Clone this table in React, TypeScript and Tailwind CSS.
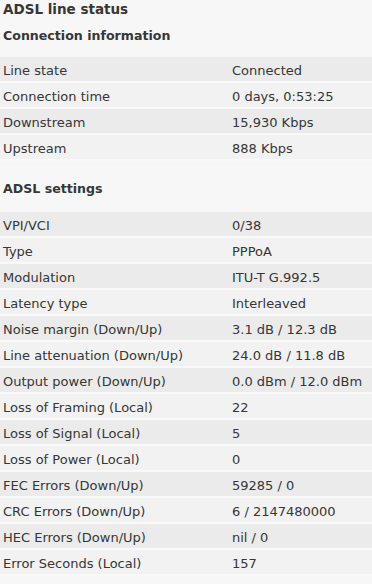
const connection: [string, string][] = [
  ["Line state", "Connected"],
  ["Connection time", "0 days, 0:53:25"],
  ["Downstream", "15,930 Kbps"],
  ["Upstream", "888 Kbps"],
];

const settings: [string, string][] = [
  ["VPI/VCI", "0/38"],
  ["Type", "PPPoA"],
  ["Modulation", "ITU-T G.992.5"],
  ["Latency type", "Interleaved"],
  ["Noise margin (Down/Up)", "3.1 dB / 12.3 dB"],
  ["Line attenuation (Down/Up)", "24.0 dB / 11.8 dB"],
  ["Output power (Down/Up)", "0.0 dBm / 12.0 dBm"],
  ["Loss of Framing (Local)", "22"],
  ["Loss of Signal (Local)", "5"],
  ["Loss of Power (Local)", "0"],
  ["FEC Errors (Down/Up)", "59285 / 0"],
  ["CRC Errors (Down/Up)", "6 / 2147480000"],
  ["HEC Errors (Down/Up)", "nil / 0"],
  ["Error Seconds (Local)", "157"],
];

function StatusTable({ rows }: { rows: [string, string][] }) {
  return (
    <div className="flex flex-col">
      {rows.map(([label, value], i) => (
        <div
          key={label}
          className={`flex h-[26px] items-center border-b-2 border-[#f9f9f9] pt-[2px] ${
            i % 2 === 0 ? "bg-[#ebebeb]" : "bg-[#f2f2f2]"
          }`}
        >
          <span className="w-[232px] pl-[3px]">{label}</span>
          <span>{value}</span>
        </div>
      ))}
    </div>
  );
}

export default function App() {
  return (
    <div
      className="min-h-[584px] w-[372px] bg-[#f7f7f7] text-[13px] leading-none text-[#363636]"
      style={{ fontFamily: '"DejaVu Sans", Verdana, sans-serif' }}
    >
      <h1 className="pl-[3px] pt-[3px] text-[13.5px] font-bold leading-[12px]">
        ADSL line status
      </h1>
      <h2 className="pl-[3px] pt-[15px] text-[12.6px] font-bold leading-[12px]">
        Connection information
      </h2>
      <div className="pt-[15px]">
        <StatusTable rows={connection} />
      </div>
      <h2 className="pl-[3px] pt-[22px] text-[12.6px] font-bold leading-[12px]">
        ADSL settings
      </h2>
      <div className="pt-[17px]">
        <StatusTable rows={settings} />
      </div>
    </div>
  );
}
